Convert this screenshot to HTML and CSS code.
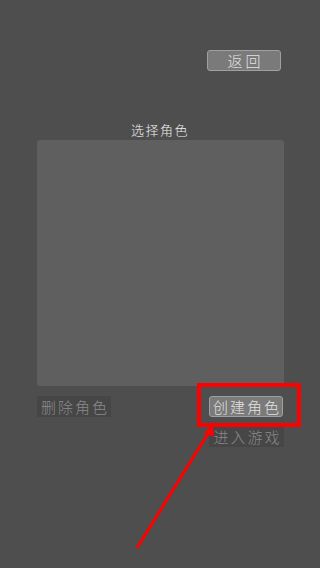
FILE: index.html
```html
<!DOCTYPE html>
<html lang="zh-CN">
<head>
  <meta charset="UTF-8" />
  <meta name="viewport" content="width=device-width, initial-scale=1.0"/>
  <title>选择角色</title>
  <link rel="stylesheet" href="styles.css">
</head>
<body>
  <div class="screen">
    <div class="top-bar">
      <button class="btn btn-light btn-back">返回</button>
    </div>

    <h2 class="title">选择角色</h2>

    <div class="role-list"></div>

    <div class="action-row">
      <button class="btn btn-dark">删除角色</button>
      <div class="right-col">
        <button class="btn btn-light">创建角色</button>
        <button class="btn btn-dark btn-enter">进入游戏</button>
      </div>
    </div>

    <!-- annotation overlay -->
    <div class="mark-box"></div>
    <svg class="mark-arrow" width="320" height="568" viewBox="0 0 320 568">
      <line x1="137" y1="548" x2="209" y2="432" stroke="#ff0000" stroke-width="3" />
      <polygon points="213,424 204,433 214,437" fill="#ff0000" />
    </svg>
  </div>
</body>
</html>
```

FILE: styles.css
```css
:root {
  --bg: #4e4e4e;
  --panel: #5f5f5f;
  --light: #7a7a7a;
  --light-border: #a0a0a0;
  --dark: #464646;
  --font: "Noto Sans CJK SC", "Noto Sans CJK TC", sans-serif;
}

* {
  box-sizing: border-box;
}

body {
  margin: 0;
  background-color: var(--bg);
  font-family: var(--font);
}

.screen {
  position: relative;
  width: 320px;
  height: 568px;
  overflow: hidden;
}

.top-bar {
  display: flex;
  justify-content: flex-end;
  padding: 50px 39px 0 0;
}

.btn {
  width: 74px;
  height: 21px;
  padding: 0;
  font-family: var(--font);
  font-size: 15px;
  font-weight: 300;
  line-height: 19px;
  letter-spacing: 2px;
  text-indent: 2px;
  border-radius: 3px;
  cursor: pointer;
}

.btn-light {
  background-color: var(--light);
  border: 1px solid var(--light-border);
  color: #e0e0e0;
}

.btn-back {
  letter-spacing: 3px;
  text-indent: 3px;
}

.btn-dark {
  background-color: var(--dark);
  border: 1px solid var(--dark);
  border-radius: 0;
  color: #8a8a8a;
}

.title {
  margin: 50px 0 0;
  height: 19px;
  text-align: center;
  font-size: 13px;
  font-weight: 300;
  line-height: 17px;
  letter-spacing: 1.5px;
  color: #f0f0f0;
}

.role-list {
  margin: 0 36px 0 37px;
  height: 246px;
  background-color: var(--panel);
  border-radius: 3px;
}

.action-row {
  display: flex;
  justify-content: space-between;
  padding: 10px 37px 0 37px;
}

.right-col {
  display: flex;
  flex-direction: column;
  align-items: flex-end;
  gap: 9px;
}

.btn-enter {
  width: 75px;
  margin-right: -1px;
}

.mark-box {
  position: absolute;
  left: 197px;
  top: 383px;
  width: 104px;
  height: 44px;
  border: 4px solid #ff0000;
}

.mark-arrow {
  position: absolute;
  left: 0;
  top: 0;
  pointer-events: none;
}
```
